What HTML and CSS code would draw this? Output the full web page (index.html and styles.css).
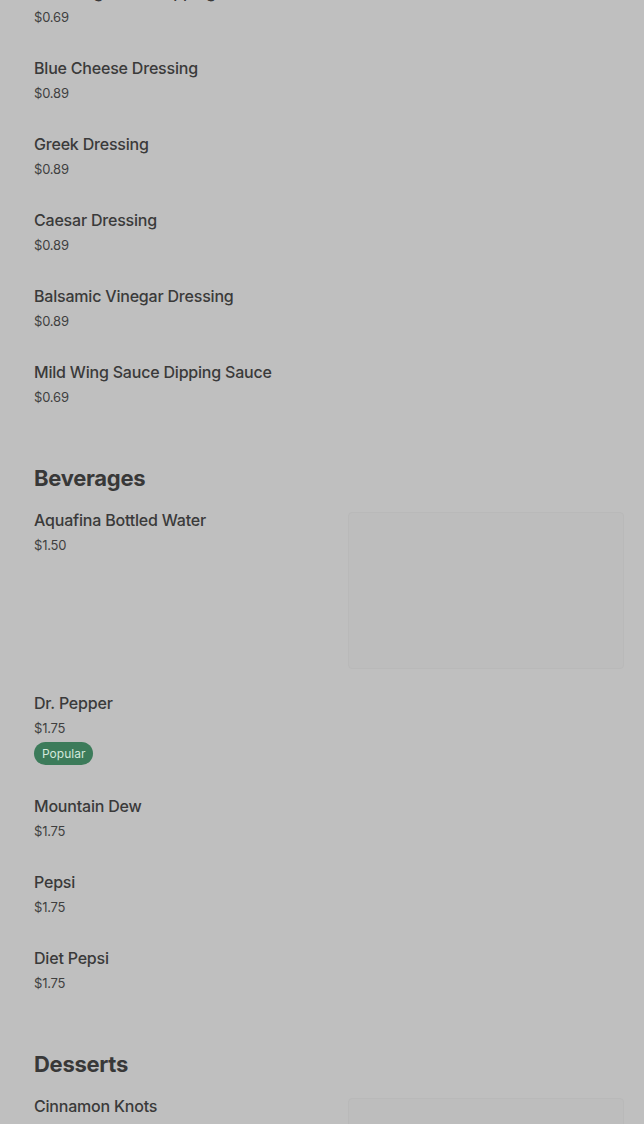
FILE: index.html
```html
<!DOCTYPE html>
<html lang="en">
<head>
    <meta charset="UTF-8">
    <meta name="viewport" content="width=device-width, initial-scale=1.0">
    <title>Menu</title>
    <link rel="stylesheet" href="styles.css">
</head>
<body>
<div class="menu">
    <div class="section">
        <div class="item">
            <div class="item-info">
                <div class="item-name">Hot Wing Sauce Dipping Sauce</div>
                <div class="item-price">$0.69</div>
            </div>
        </div>
        <div class="item">
            <div class="item-info">
                <div class="item-name">Blue Cheese Dressing</div>
                <div class="item-price">$0.89</div>
            </div>
        </div>
        <div class="item">
            <div class="item-info">
                <div class="item-name">Greek Dressing</div>
                <div class="item-price">$0.89</div>
            </div>
        </div>
        <div class="item">
            <div class="item-info">
                <div class="item-name">Caesar Dressing</div>
                <div class="item-price">$0.89</div>
            </div>
        </div>
        <div class="item">
            <div class="item-info">
                <div class="item-name">Balsamic Vinegar Dressing</div>
                <div class="item-price">$0.89</div>
            </div>
        </div>
        <div class="item">
            <div class="item-info">
                <div class="item-name">Mild Wing Sauce Dipping Sauce</div>
                <div class="item-price">$0.69</div>
            </div>
        </div>
    </div>

    <div class="section">
        <h2 class="section-title">Beverages</h2>
        <div class="item item-photo">
            <div class="item-info">
                <div class="item-name">Aquafina Bottled Water</div>
                <div class="item-price">$1.50</div>
            </div>
            <div class="photo"></div>
        </div>
        <div class="item">
            <div class="item-info">
                <div class="item-name">Dr. Pepper</div>
                <div class="item-price">$1.75</div>
                <span class="badge">Popular</span>
            </div>
        </div>
        <div class="item">
            <div class="item-info">
                <div class="item-name">Mountain Dew</div>
                <div class="item-price">$1.75</div>
            </div>
        </div>
        <div class="item">
            <div class="item-info">
                <div class="item-name">Pepsi</div>
                <div class="item-price">$1.75</div>
            </div>
        </div>
        <div class="item">
            <div class="item-info">
                <div class="item-name">Diet Pepsi</div>
                <div class="item-price">$1.75</div>
            </div>
        </div>
    </div>

    <div class="section">
        <h2 class="section-title">Desserts</h2>
        <div class="item item-photo">
            <div class="item-info">
                <div class="item-name">Cinnamon Knots</div>
                <div class="item-price">$4.99</div>
            </div>
            <div class="photo"></div>
        </div>
    </div>
</div>
</body>
</html>
```

FILE: styles.css
```css
body {
    margin: 0;
    padding: 0;
    background-color: #bfbfbf; /* page under the dim overlay */
    font-family: Inter, Roboto, "Liberation Sans", sans-serif;
    color: #3a3a3a;
    overflow: hidden;
}
.menu {
    margin-top: -34px; /* list is scrolled a little */
    padding: 0 20px 0 34px;
}
.section-title {
    margin: 42px 0 2px 0;
    font-size: 22px;
    line-height: 28px;
    font-weight: 700;
    letter-spacing: -0.3px;
    color: #383838;
}
.item {
    display: grid;
    grid-template-columns: 1fr 276px;
    padding: 14px 0 15px 0;
}
.item-photo {
    padding-bottom: 8px;
}
.item-info {
    display: flex;
    flex-direction: column;
    align-items: flex-start;
}
.item-name {
    font-size: 16px;
    line-height: 24px;
    font-weight: 500;
    letter-spacing: -0.2px;
    color: #3a3a3a;
}
.item-price {
    margin-top: 3px;
    font-size: 13px;
    line-height: 20px;
    letter-spacing: -0.2px;
    color: #3f3f3f;
}
.badge {
    margin-top: 4px;
    height: 23px;
    line-height: 23px;
    padding: 0 8px;
    border-radius: 12px;
    background: #3c7b5a;
    color: #d3e8dc;
    font-size: 12px;
}
.photo {
    margin-top: 4px;
    height: 155px;
    background: #bdbdbd;
    border: 1px solid #b9b9b9;
    border-radius: 4px;
}
```
